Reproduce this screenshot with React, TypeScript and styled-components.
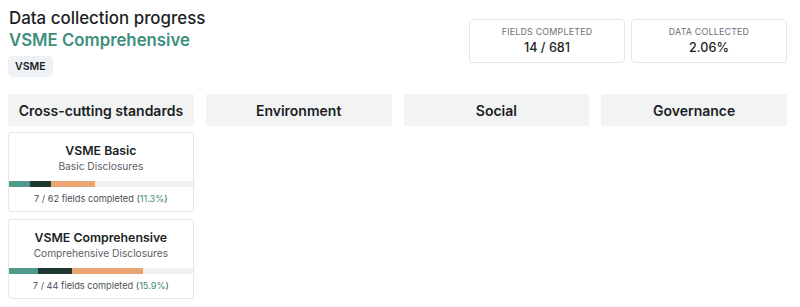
import React from "react"
import styled, { createGlobalStyle } from "styled-components"

const GlobalStyle = createGlobalStyle`
    html, body {
        margin: 0;
        padding: 0;
        background: #fff;
        font-family: Inter, "Noto Sans", sans-serif;
        color: #1b1f24;
    }
    * {
        box-sizing: border-box;
    }
`

const green = "#3d8f7c"

const Page = styled.div`
    width: 800px;
    padding: 7px 13px 0 8px;
`

const Header = styled.div`
    display: flex;
    justify-content: space-between;
    align-items: flex-start;
`

const TitleBlock = styled.div`
    display: flex;
    flex-direction: column;
    align-items: flex-start;
`

const Title = styled.h1`
    margin: 0 0 0 1px;
    font-size: 16.9px;
    line-height: 22px;
    font-weight: 500;
    color: #1b1f24;
`

const Subtitle = styled.h2`
    margin: 0 0 0 1px;
    font-size: 16.8px;
    line-height: 22px;
    font-weight: 600;
    color: ${green};
`

const Badge = styled.span`
    margin-top: 5px;
    padding: 4px 7px;
    background: #eef1f6;
    border-radius: 5px;
    font-size: 10.5px;
    line-height: 13px;
    font-weight: 600;
    color: #1b1f24;
`

const Stats = styled.div`
    display: flex;
    gap: 6px;
    margin-top: 12px;
`

const StatCard = styled.div`
    width: 156px;
    height: 44px;
    border: 1px solid #e6e8eb;
    border-radius: 4px;
    display: flex;
    flex-direction: column;
    align-items: center;
    justify-content: center;
    gap: 3px;
`

const StatLabel = styled.div`
    font-size: 8.9px;
    line-height: 11px;
    letter-spacing: 0.2px;
    color: #6b7078;
    text-transform: uppercase;
`

const StatValue = styled.div`
    font-size: 12.6px;
    line-height: 16px;
    font-weight: 500;
    color: #1b1f24;
`

const Columns = styled.div`
    margin-top: 17px;
    display: grid;
    grid-template-columns: repeat(4, 1fr);
    column-gap: 12px;
    align-items: start;
`

const Column = styled.div`
    display: flex;
    flex-direction: column;
    gap: 7px;
`

const ColumnHeader = styled.div`
    height: 32px;
    background: #f2f3f3;
    border-radius: 2px;
    display: flex;
    align-items: center;
    justify-content: center;
    font-size: 14px;
    font-weight: 600;
    color: #1b1f24;
    margin-bottom: -1px;
`

const Card = styled.div`
    height: 80px;
    border: 1px solid #e6e8eb;
    border-radius: 3px;
    display: flex;
    flex-direction: column;
    align-items: center;
    padding-top: 10px;
`

const CardTitle = styled.div`
    font-size: 12.3px;
    line-height: 16px;
    font-weight: 600;
    color: #1b1f24;
`

const CardSubtitle = styled.div`
    margin-top: 1px;
    font-size: 10.2px;
    line-height: 13px;
    color: #5b6067;
`

const Bar = styled.div`
    margin-top: 8px;
    width: 100%;
    height: 6px;
    background: #f0f1f3;
    display: flex;
`

const Segment = styled.div<{ $color: string }>`
    height: 100%;
    background: ${(p) => p.$color};
`

const CardFooter = styled.div`
    margin-top: 6px;
    font-size: 9.2px;
    line-height: 12px;
    color: #4a4f56;
`

const Percent = styled.span`
    color: ${green};
`

type Module = {
    title: string
    subtitle: string
    done: number
    total: number
    percent: string
    segments: number[]
}

const modules: Module[] = [
    {
        title: "VSME Basic",
        subtitle: "Basic Disclosures",
        done: 7,
        total: 62,
        percent: "11.3%",
        segments: [11.4, 11.4, 24],
    },
    {
        title: "VSME Comprehensive",
        subtitle: "Comprehensive Disclosures",
        done: 7,
        total: 44,
        percent: "15.9%",
        segments: [15.8, 18.3, 38.8],
    },
]

const segmentColors = ["#4f9b8b", "#1d3733", "#e9a571"]

const columns = ["Cross-cutting standards", "Environment", "Social", "Governance"]

export default function App() {
    return (
        <>
            <GlobalStyle />
            <Page>
                <Header>
                    <TitleBlock>
                        <Title>Data collection progress</Title>
                        <Subtitle>VSME Comprehensive</Subtitle>
                        <Badge>VSME</Badge>
                    </TitleBlock>
                    <Stats>
                        <StatCard>
                            <StatLabel>Fields completed</StatLabel>
                            <StatValue>14 / 681</StatValue>
                        </StatCard>
                        <StatCard>
                            <StatLabel>Data collected</StatLabel>
                            <StatValue>2.06%</StatValue>
                        </StatCard>
                    </Stats>
                </Header>
                <Columns>
                    {columns.map((name, i) => (
                        <Column key={name}>
                            <ColumnHeader>{name}</ColumnHeader>
                            {i === 0 &&
                                modules.map((m) => (
                                    <Card key={m.title}>
                                        <CardTitle>{m.title}</CardTitle>
                                        <CardSubtitle>{m.subtitle}</CardSubtitle>
                                        <Bar>
                                            {m.segments.map((w, j) => (
                                                <Segment key={j} $color={segmentColors[j]} style={{ width: `${w}%` }} />
                                            ))}
                                        </Bar>
                                        <CardFooter>
                                            {m.done} / {m.total} fields completed (<Percent>{m.percent}</Percent>)
                                        </CardFooter>
                                    </Card>
                                ))}
                        </Column>
                    ))}
                </Columns>
            </Page>
        </>
    )
}
